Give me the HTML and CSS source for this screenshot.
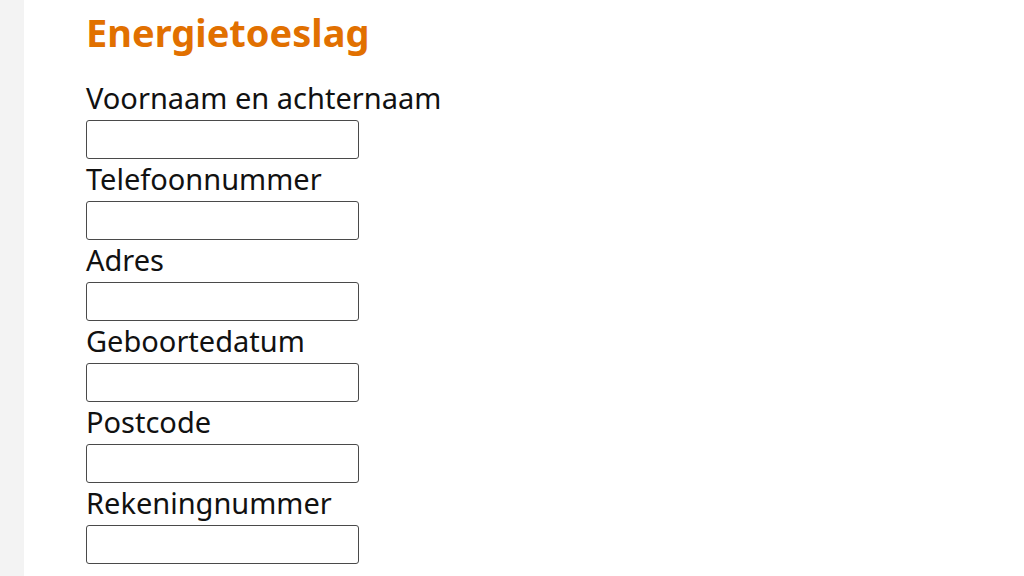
FILE: index.html
```
<!DOCTYPE html>
<html lang="nl">
<head>
<meta charset="utf-8">
<title>Energietoeslag</title>
<link rel="stylesheet" href="styles.css">
</head>
<body>
<div class="page">
  <div class="side"></div>
  <main class="content">
    <h1 class="title">Energietoeslag</h1>
    <form class="form">
      <label class="field"><span class="label">Voornaam en achternaam</span><input class="input" type="text"></label>
      <label class="field"><span class="label">Telefoonnummer</span><input class="input" type="text"></label>
      <label class="field"><span class="label">Adres</span><input class="input" type="text"></label>
      <label class="field"><span class="label">Geboortedatum</span><input class="input" type="text"></label>
      <label class="field"><span class="label">Postcode</span><input class="input" type="text"></label>
      <label class="field"><span class="label">Rekeningnummer</span><input class="input" type="text"></label>
    </form>
  </main>
</div>
</body>
</html>
```
FILE: styles.css
```
html, body {
  margin: 0;
  padding: 0;
  background: #ffffff;
  height: 100%;
  overflow: hidden;
}
.page {
  display: flex;
  min-height: 576px;
  font-family: "Noto Sans", "Open Sans", sans-serif;
  color: #111111;
}
.side {
  width: 24px;
  background: #f3f3f3;
  flex: none;
}
.content {
  padding: 6px 0 0 62px;
}
.title {
  margin: 0;
  font-size: 38px;
  line-height: 52px;
  font-weight: 700;
  color: #e17000;
}
.form {
  display: flex;
  flex-direction: column;
  margin-top: 22px;
}
.field {
  display: flex;
  flex-direction: column;
  align-items: flex-start;
}
.label {
  font-size: 29px;
  line-height: 35px;
  padding-bottom: 5px;
}
.input {
  box-sizing: border-box;
  width: 273px;
  height: 39px;
  margin: 0 0 2px 0;
  border: 1px solid #4a4a4a;
  border-radius: 3px;
  padding: 0 6px;
  font: inherit;
  font-size: 18px;
}
```
